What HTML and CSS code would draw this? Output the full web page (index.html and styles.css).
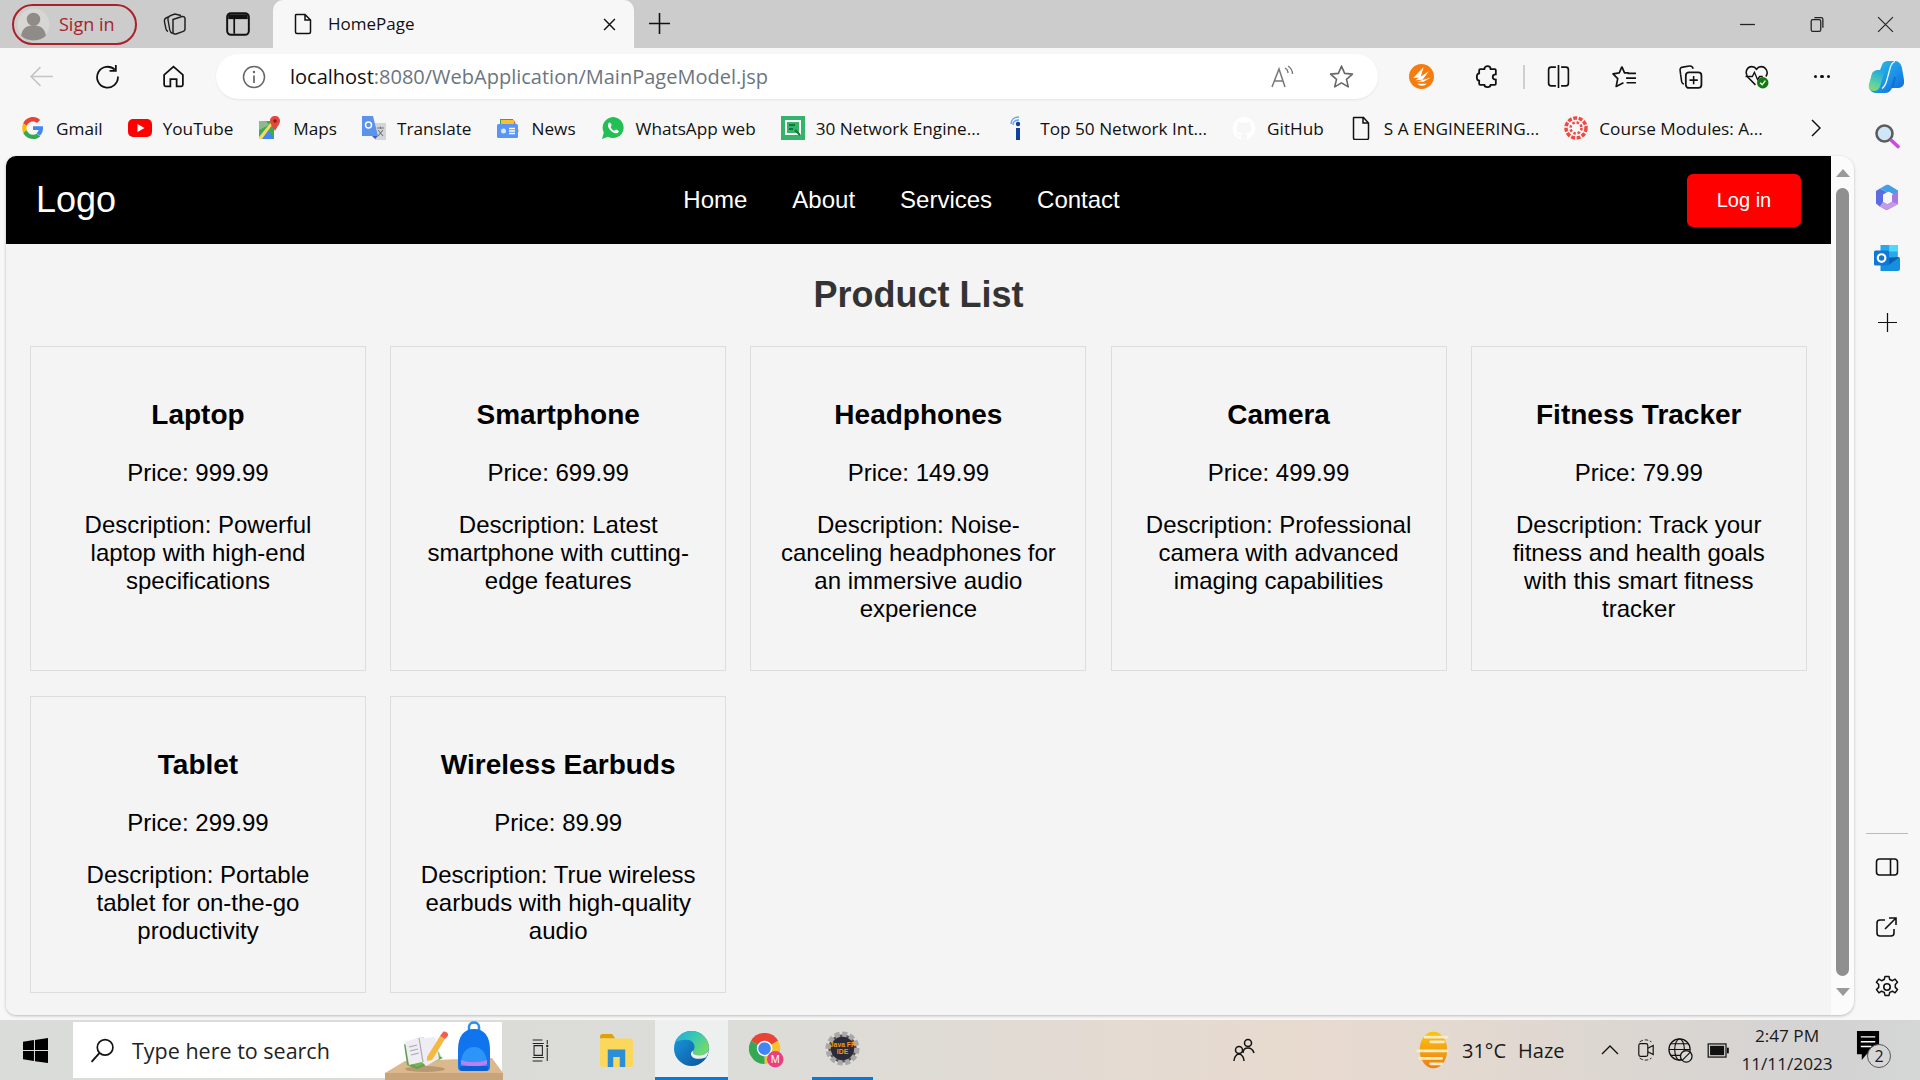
FILE: index.html

```html
<!DOCTYPE html>
<html>
<head>
<meta charset="UTF-8">
<title>HomePage</title>
<link rel="stylesheet" href="styles.css">
</head>
<body>

<!-- browser title bar -->
<div class="titlebar">
  <div class="signin">
    <svg class="avatar" viewBox="0 0 32 32"><circle cx="16" cy="16" r="15.5" fill="#d8d6d3"/><circle cx="16" cy="11" r="6.5" fill="#8f8b87"/><path d="M4 27c1-8 6-10 12-10s11 2 12 10c-3 3-7 4.5-12 4.5S7 30 4 27z" fill="#8f8b87"/></svg>
    <span>Sign in</span>
  </div>
  <svg class="tb-ic" viewBox="0 0 26 26"><path d="M6 6C3 7 2 9 2.500 11l1.500 7c.3 1 1 2 2 2.500M10 4C7 5 5.500 7 6 9l1.800 10c.2 1.500 1.500 3 3 3.500" fill="none" stroke="#222" stroke-width="1.400"/><path d="M11 8.500 20 5.500c1.500-.4 3 .5 3 2V18c0 1.200-.6 2-1.700 2.400L14 23c-1.500.4-3-.4-3-2z" fill="none" stroke="#222" stroke-width="1.500"/><path d="M10 4l3-1 6 1.500" fill="none" stroke="#222" stroke-width="1.400"/></svg>
  <svg class="tb-ic" viewBox="0 0 24 24"><rect x="2" y="2" width="20" height="20" rx="3.500" fill="none" stroke="#111" stroke-width="1.800"/><path d="M3 3h18v4.500H3z" fill="#111"/><path d="M8.500 7v14" stroke="#111" stroke-width="1.600"/></svg>
  <div class="tab">
    <svg class="tab-doc" viewBox="0 0 24 24"><path d="M5 2.500h9l5.500 5.500v12c0 1-.6 1.500-1.500 1.500H6c-.9 0-1.500-.5-1.500-1.500V3.500c0-.6.2-1 .5-1zM14 2.500V8h5.500" fill="none" stroke="#111" stroke-width="1.500"/></svg>
    <span class="tab-name">HomePage</span>
    <svg class="tab-x" viewBox="0 0 12 12"><path d="M1 1l10 10M11 1L1 11" stroke="#111" stroke-width="1.300"/></svg>
  </div>
  <svg class="tab-plus" viewBox="0 0 20 20"><path d="M10 0v20M0 10h20" stroke="#111" stroke-width="1.500"/></svg>
  <div class="winctl">
    <svg viewBox="0 0 16 16"><path d="M1 8h14" stroke="#222" stroke-width="1.200"/></svg>
    <svg viewBox="0 0 16 16"><rect x="3" y="3.500" width="9" height="11" rx="1.500" fill="none" stroke="#222" stroke-width="1.200"/><path d="M6 1.500h6.500c1 0 1.500.5 1.500 1.500v8" fill="none" stroke="#222" stroke-width="1.200"/></svg>
    <svg viewBox="0 0 16 16"><path d="M1 1l14 14M15 1L1 15" stroke="#222" stroke-width="1.100"/></svg>
  </div>
</div>

<!-- address bar row -->
<div class="toolbar">
  <div class="tbtn"><svg viewBox="0 0 24 24"><path d="M23 12H2M11 3l-9 9 9 9" fill="none" stroke="#c4c4c4" stroke-width="1.500"/></svg></div>
  <div class="tbtn"><svg viewBox="0 0 24 24"><path d="M19 5.500A10 10 0 1 0 22 12M20 1v5.500h-6" fill="none" stroke="#111" stroke-width="1.700"/></svg></div>
  <div class="tbtn"><svg viewBox="0 0 24 24"><path d="M12 2.500 3 10.500V20c0 1 .6 1.500 1.500 1.500H9v-7h6v7h4.500c.9 0 1.500-.5 1.500-1.500v-9.500z" fill="none" stroke="#111" stroke-width="1.700"/></svg></div>
  <div class="addr">
    <svg class="addr-info" viewBox="0 0 24 24"><circle cx="12" cy="12" r="10.500" fill="none" stroke="#666" stroke-width="1.500"/><path d="M12 10.500V18" stroke="#666" stroke-width="1.700"/><circle cx="12" cy="7" r="1.200" fill="#666"/></svg>
    <span class="url"><b>localhost</b>:8080/WebApplication/MainPageModel.jsp</span>
    <svg class="addr-read" viewBox="0 0 24 24"><path d="M2 22 9 4l6 18M4.500 16h9" fill="none" stroke="#777" stroke-width="1.500"/><path d="M15 3c2 1 3 3 3 5M18 1c3 2 4.500 4 4.500 8" fill="none" stroke="#777" stroke-width="1.300"/></svg>
    <svg class="addr-star" viewBox="0 0 24 24"><path d="m12 2 3 7 7.500.7-5.700 5 1.700 7.300-6.500-3.900L5.500 22l1.700-7.300-5.700-5L9 9z" fill="none" stroke="#666" stroke-width="1.500" stroke-linejoin="round"/></svg>
  </div>
  <div class="tbtn first"><svg viewBox="0 0 24 24"><circle cx="12" cy="12" r="12" fill="#f57c0f"/><path d="M4 13.500 14 3l-3 10zM6 15.500 19 7l-6 8zM7.500 17 21 13l-7 4zM8 19h9c-2 2.500-7 2.500-9 0z" fill="#fff"/></svg></div>
  <div class="tbtn"><svg viewBox="0 0 24 24"><path d="M9 5c0-4 6-4 6 0h4c.6 0 1 .4 1 1v4c-4 0-4 5 0 5v4c0 .6-.4 1-1 1h-4c0 3-6 3-6 0H5c-.6 0-1-.4-1-1v-3c-3 0-3-7 0-7V6c0-.6.4-1 1-1z" fill="none" stroke="#111" stroke-width="1.700"/></svg></div>
  <div class="tdiv"></div>
  <div class="tbtn"><svg viewBox="0 0 24 24"><path d="M9.500 3H5C3.500 3 2.500 4 2.500 5.500v13C2.500 20 3.500 21 5 21h4.500M14.500 3H19c1.500 0 2.500 1 2.500 2.500v13c0 1.500-1 2.500-2.500 2.500h-4.500M12 1v22" fill="none" stroke="#111" stroke-width="1.600"/></svg></div>
  <div class="tbtn"><svg viewBox="0 0 24 24"><path d="M9.500 2.500 12 8.500h4M9.500 2.500 7 8.500 1 9.500l4.500 4.500L4 21.500l7-3.500" fill="none" stroke="#111" stroke-width="1.600" stroke-linejoin="round"/><path d="M15 9h8M13.500 13.500H23M14 18h9" stroke="#111" stroke-width="1.600"/></svg></div>
  <div class="tbtn"><svg viewBox="0 0 24 24"><path d="M2.500 10 2 6c-.2-1.500 1-3 2.500-3L11 2c1.500-.2 3 .8 3.500 2.500M2.500 10l1 7c.2 1 1 2 2 2.500" fill="none" stroke="#111" stroke-width="1.500"/><rect x="7.500" y="8" width="15" height="15" rx="3" fill="none" stroke="#111" stroke-width="1.700"/><path d="M15 11.500v8M11 15.500h8" stroke="#111" stroke-width="1.500"/></svg></div>
  <div class="tbtn"><svg viewBox="0 0 24 24"><path d="M11 20 4 13C0 8 3 2.500 7.500 2.500c2 0 3.500 1 4.500 2.500 1-1.500 2.500-2.500 4.500-2.500C21 2.500 24 8 21 12" fill="none" stroke="#111" stroke-width="1.500"/><path d="M1.500 12H8l2-4 3 7 2-3h3" fill="none" stroke="#111" stroke-width="1.300"/><circle cx="18" cy="18" r="5.500" fill="#107c10"/><path d="m15.500 18 2 2 3-4" fill="none" stroke="#fff" stroke-width="1.300"/></svg></div>
  <div class="tbtn dots"><i></i><i></i><i></i></div>
  <div class="tbtn"><svg class="copilot" viewBox="0 0 36 32"><defs><linearGradient id="cp1" x1="0" y1="0" x2="1" y2="1"><stop offset="0" stop-color="#2cc6e8"/><stop offset=".6" stop-color="#1a8fe6"/><stop offset="1" stop-color="#1560d8"/></linearGradient><linearGradient id="cp2" x1=".6" y1="0" x2=".3" y2="1"><stop offset="0" stop-color="#22a9e0"/><stop offset=".7" stop-color="#5fd3a0"/><stop offset="1" stop-color="#86d96a"/></linearGradient></defs><path d="M14 4C15 1 17 0 20 0h7c4 0 6 3 7 7l2 12c1 5-2 8-6 8h-6c-1 3-4 5-7 5H8c-4 0-7-3-7-7L4 13c1-3 4-4 7-4h1z" fill="url(#cp1)"/><path d="M12 9h5l-4 13c-1 5-3 8-7 8-4 0-6-3-5-7l3-10c1-3 4-4 8-4z" fill="url(#cp2)"/><path d="M27 .5c-3 1-4 3-5 7l-3 11c-1 4-2 7-5 9" fill="none" stroke="#f2fbff" stroke-width="1.300"/><path d="M24 27c1-3 2-7 3-11" fill="none" stroke="#0f6fdc" stroke-width="2"/></svg></div>
</div>

<div class="middle">
  <div class="left-col">

    <!-- bookmarks -->
    <div class="bookmarks">
      <div class="bm"><svg viewBox="0 0 24 24"><path d="M22 12.200c0-.8-.1-1.400-.2-2H12v3.900h5.600c-.3 1.300-1 2.400-2.200 3.100l3.400 2.600c2-1.900 3.200-4.600 3.200-7.600z" fill="#4285f4"/><path d="M12 23c2.900 0 5.400-1 7.200-2.600l-3.500-2.700c-1 .7-2.200 1.100-3.700 1.100-2.900 0-5.300-1.900-6.200-4.500H2.300v2.800C4.100 20.600 7.800 23 12 23z" fill="#34a853"/><path d="M5.800 14.300c-.5-1.500-.5-3 0-4.600V6.900H2.300c-1.500 3-1.500 7.200 0 10.200z" fill="#fbbc05"/><path d="M12 5.500c1.600 0 3 .5 4.100 1.600l3-3C17.400 2.100 14.900 1 12 1 7.800 1 4.100 3.400 2.300 6.900l3.500 2.800C6.700 7.400 9.100 5.500 12 5.500z" fill="#ea4335"/></svg><span>Gmail</span></div>
      <div class="bm"><svg viewBox="0 0 24 24"><rect y="3" width="24" height="18" rx="5" fill="#f00"/><path d="m9.500 8 7 4-7 4z" fill="#fff"/></svg><span>YouTube</span></div>
      <div class="bm"><svg viewBox="0 0 24 24"><path d="M1 5h15v18H1z" fill="#3bab5a"/><path d="M1 23 9 13l7 10z" fill="#4285f4"/><path d="M1 21 14 5h3L4 23H1z" fill="#fbd75b"/><path d="M1 5h7l3 4-10 5z" fill="#8fb88f"/><path d="M17 0c-3 0-5 2-5 5 0 3 3 6 5 10 2-4 5-7 5-10 0-3-2-5-5-5z" fill="#e2483d"/><circle cx="17" cy="5" r="1.800" fill="#8c1c13"/></svg><span>Maps</span></div>
      <div class="bm"><svg viewBox="0 0 24 24"><path d="M11 7h13v17H13z" fill="#d3d5d8"/><path d="M15 12h7M18.500 10.500V13M16 20l5-6M16 14l5 6" stroke="#777" stroke-width="1.100"/><path d="M0 0h11l5 20H0z" fill="#5b92ee"/><path d="m10 20h6l-3 3z" fill="#3c5fc0"/><circle cx="6.500" cy="9" r="3" fill="none" stroke="#fff" stroke-width="1.500"/></svg><span>Translate</span></div>
      <div class="bm"><svg viewBox="0 0 24 24"><path d="M4 3h13l2 8H4z" fill="#34a853"/><path d="M5 4h13v5H5z" fill="#fbc02d"/><path d="M18 4l5 12-5-4z" fill="#e2574c"/><rect x="1" y="8" width="21" height="14" rx="1.500" fill="#5a95f5"/><circle cx="7.500" cy="15" r="2.500" fill="#dbe7fb"/><path d="M13 12.500h6M13 15h6M13 17.500h6" stroke="#fff" stroke-width="1.300"/></svg><span>News</span></div>
      <div class="bm"><svg viewBox="0 0 24 24"><path d="M1 23 2.800 16.500a10.500 10.500 0 1 1 4.200 4.300z" fill="#22bf55"/><path d="M8.500 6.500c-1 .3-1.800 1.800-1.500 3.500.6 3 4 6.700 7.500 7.300 1.500.2 3-.5 3.300-1.800.2-.7-2.500-2.300-3-2l-1.300 1.200c-1.500-.3-3.300-2.200-3.900-3.800l1-1.400c.3-.5-1.200-3.300-2.100-3z" fill="#fff"/></svg><span>WhatsApp web</span></div>
      <div class="bm"><svg viewBox="0 0 24 24"><rect width="24" height="24" fill="#34b36b"/><path d="M5 5h14v13H5z" fill="none" stroke="#fff" stroke-width="2"/><path d="M8 9h6M8 13h4M14 14l5 5" stroke="#173" stroke-width="2"/></svg><span>30 Network Engine...</span></div>
      <div class="bm"><svg viewBox="0 0 24 24"><path d="M6 8c0-4 3-7 8-7M8 9c0-3 2-5 6-5" fill="none" stroke="#6aa4e8" stroke-width="1.500"/><circle cx="13" cy="8" r="2.200" fill="#123f9b"/><path d="M11 12h4v12h-4z" fill="#123f9b"/></svg><span>Top 50 Network Int...</span></div>
      <div class="bm"><svg viewBox="0 0 24 24"><path d="M12 1a11.500 11.500 0 0 0-3.600 22.400c.6.1.8-.3.8-.6v-2c-3.200.7-3.900-1.500-3.900-1.500-.5-1.300-1.300-1.700-1.300-1.700-1-.7.1-.7.1-.7 1.200.1 1.800 1.200 1.800 1.200 1 1.800 2.700 1.300 3.300 1 .1-.8.4-1.300.7-1.600-2.600-.3-5.300-1.300-5.300-5.700 0-1.300.5-2.300 1.200-3.100-.1-.3-.5-1.500.1-3.100 0 0 1-.3 3.200 1.200a11 11 0 0 1 5.800 0c2.200-1.500 3.200-1.200 3.200-1.200.6 1.600.2 2.800.1 3.100.7.8 1.200 1.800 1.200 3.100 0 4.400-2.700 5.400-5.300 5.700.4.4.8 1 .8 2.100v3.100c0 .3.2.7.8.6A11.500 11.500 0 0 0 12 1z" fill="#fff"/></svg><span>GitHub</span></div>
      <div class="bm"><svg viewBox="0 0 24 24"><path d="M5 1.500h9.500l5 5.500v15c0 .9-.6 1.500-1.500 1.500H6c-.9 0-1.500-.6-1.500-1.500V2c0-.3.2-.5.500-.5zM14 1.500V7h5.500" fill="none" stroke="#111" stroke-width="1.500"/></svg><span>S A ENGINEERING...</span></div>
      <div class="bm"><svg viewBox="0 0 24 24"><circle cx="12" cy="12" r="10" fill="none" stroke="#ee4a42" stroke-width="3.500" stroke-dasharray="4 1.500"/><circle cx="12" cy="12" r="5.500" fill="none" stroke="#ee4a42" stroke-width="2.500" stroke-dasharray="2.500 1.800"/></svg><span>Course Modules: A...</span></div>
      <svg class="bm-more" viewBox="0 0 10 18"><path d="m1 1 8 8-8 8" fill="none" stroke="#111" stroke-width="1.500"/></svg>
    </div>

    <!-- the page itself -->
    <div class="frame">
      <div class="page">
        <nav class="navbar">
          <div class="logo">Logo</div>
          <ul class="nav-links">
            <li>Home</li>
            <li>About</li>
            <li>Services</li>
            <li>Contact</li>
          </ul>
          <button class="login">Log in</button>
        </nav>
        <h2 class="page-title">Product List</h2>
        <div class="products">
          <div class="card">
            <h3>Laptop</h3>
            <p class="price">Price: 999.99</p>
            <p>Description: Powerful laptop with high-end specifications</p>
          </div>
          <div class="card">
            <h3>Smartphone</h3>
            <p class="price">Price: 699.99</p>
            <p>Description: Latest smartphone with cutting-edge features</p>
          </div>
          <div class="card">
            <h3>Headphones</h3>
            <p class="price">Price: 149.99</p>
            <p>Description: Noise-canceling headphones for an immersive audio experience</p>
          </div>
          <div class="card">
            <h3>Camera</h3>
            <p class="price">Price: 499.99</p>
            <p>Description: Professional camera with advanced imaging capabilities</p>
          </div>
          <div class="card">
            <h3>Fitness Tracker</h3>
            <p class="price">Price: 79.99</p>
            <p>Description: Track your fitness and health goals with this smart fitness tracker</p>
          </div>
          <div class="card">
            <h3>Tablet</h3>
            <p class="price">Price: 299.99</p>
            <p>Description: Portable tablet for on-the-go productivity</p>
          </div>
          <div class="card">
            <h3>Wireless Earbuds</h3>
            <p class="price">Price: 89.99</p>
            <p>Description: True wireless earbuds with high-quality audio</p>
          </div>
        </div>
      </div>
      <div class="scrollbar">
        <div class="arrow-up"></div>
        <div class="thumb"></div>
        <div class="arrow-down"></div>
      </div>
    </div>
  </div>

  <!-- edge sidebar -->
  <div class="sidebar">
    <svg class="side-ic" viewBox="0 0 26 26"><circle cx="10.500" cy="10.500" r="8" fill="#cfe6f7" stroke="#5c5c5c" stroke-width="2.600"/><path d="m17.500 17.500 6.500 6" stroke="#d044e8" stroke-width="3.600" stroke-linecap="round"/></svg>
    <svg class="side-ic" viewBox="0 0 24 26"><path d="M5 4.500 12 8.200l-4 2.300v7.800l-3 4.500L1 19.500v-12.500z" fill="#5a6ee0"/><path d="M5 4.500 11 1c1-.5 2-.5 3 0l9 5.500V13l-5-3-4-2.200-2 .4z" fill="#3fa2e6"/><path d="M23 7v12c0 .8-.4 1.500-1 1.800l-9 4.700c-1 .5-2 .5-3 0l-5-3 3-4.500 4.500 2.300 4.500-2.600V11z" fill="#a877e0"/><path d="M5 22.500l3-4.500 4.500 2.300 4.500-2.600 6 2.300-10.500 6z" fill="#c59ae8"/></svg>
    <svg class="side-ic" viewBox="0 0 24 24"><path d="M6 0h16v12H6z" fill="#28a8ea"/><path d="M14 0h8v6h-8z" fill="#50d9ff"/><path d="M6 12h18v10c0 1-.6 2-2 2H6z" fill="#1490df"/><path d="M24 11 14 18l-8-5v-1z" fill="#0a5fb0"/><rect y="5" width="14" height="14" rx="1.500" fill="#0f78d4"/><circle cx="7" cy="12" r="3.500" fill="none" stroke="#fff" stroke-width="2"/></svg>
    <svg class="side-plus" viewBox="0 0 20 20"><path d="M10 0v20M0 10h20" stroke="#111" stroke-width="1.300"/></svg>
    <div class="side-fill"></div>
    <div class="side-div"></div>
    <svg class="side-ic low" viewBox="0 0 24 24"><rect x="1.500" y="4" width="21" height="16" rx="3" fill="none" stroke="#111" stroke-width="1.600"/><path d="M15.500 4v16" stroke="#111" stroke-width="1.600"/></svg>
    <svg class="side-ic low" viewBox="0 0 24 24"><path d="M10 5H5c-2 0-3 1-3 3v10c0 2 1 3 3 3h11c2 0 3-1 3-3v-4M10 14 21 3M14 3h7v7" fill="none" stroke="#111" stroke-width="1.600"/></svg>
    <svg class="side-ic low" viewBox="0 0 24 24"><circle cx="12" cy="12" r="3.200" fill="none" stroke="#111" stroke-width="1.600"/><path d="m10 1.500 4 0 .7 3 2.700 1.200 2.700-1.600 2.400 3.200-2.200 2.200v2.900l2.200 2.200-2.400 3.200-2.700-1.600-2.700 1.200-.7 3h-4l-.7-3-2.700-1.200-2.700 1.600-2.400-3.200 2.200-2.200v-2.900L1.400 7.300l2.400-3.200 2.700 1.600 2.700-1.200z" fill="none" stroke="#111" stroke-width="1.500" stroke-linejoin="round"/></svg>
  </div>
</div>

<!-- windows taskbar -->
<div class="taskbar">
  <svg class="start" viewBox="0 0 24 24"><path d="M0 3.500 10.500 2v9.500H0zM11.500 1.800 24 0v11.500H11.500zM0 12.500h10.500V22L0 20.500zM11.500 12.500H24V24l-12.500-1.800z" fill="#000"/></svg>
  <div class="search">
    <svg class="search-ic" viewBox="0 0 24 24"><circle cx="14.500" cy="9" r="7.500" fill="none" stroke="#111" stroke-width="1.600"/><path d="M9 14.500 1.500 23" stroke="#111" stroke-width="1.800"/></svg>
    <span>Type here to search</span>
    <svg class="search-art" viewBox="0 0 118 60">
      <path d="M20 41 107 38l11 15v7H0v-7z" fill="#dcb98d"/>
      <path d="M0 53h118v7H0z" fill="#c9a47a"/>
      <ellipse cx="40" cy="49" rx="20" ry="3" fill="#b89870"/>
      <path d="M19 24l35 12 4 2-26 11-10-4z" fill="#5fa24c"/>
      <path d="M21 23 38 17l16 15 2 5-24 10-9-5z" fill="#7ab84f" opacity=".8"/>
      <path d="M20 22l15-5 6 1 9-1 4 22-11 6-2 1-4-4-13 3z" fill="#efecf3"/>
      <path d="M34 18l4 24M24 27l8-2M25 31l8-2M26 35l8-2" stroke="#a9a8b4" stroke-width="1.200"/>
      <path d="M42 37 55 16l5 3-13 21-5 1z" fill="#f5b93f"/>
      <path d="M55 16l3-4c2-1 4 0 5 2 0 1 0 2-1 3l-2 2z" fill="#ee5f4f"/>
      <path d="M84 7c0-6 10-6 10 0v4H84z" fill="none" stroke="#2a8df0" stroke-width="2.500"/>
      <path d="M73 30c0-14 6-21 16-21s16 7 16 21v17c0 3-2 4-4 4H77c-2 0-4-1-4-4z" fill="#0f74ee"/>
      <path d="M76 44c0-10 5-17 13-17s13 7 13 17v2c-8 2-18 2-26 0z" fill="#2d95f7"/>
      <path d="M76 40c8 3 18 3 26 0v4c-8 3-18 3-26 0z" fill="#bb7ff3"/>
      <rect x="75" y="46" width="28" height="5" rx="2" fill="#0c5fd0"/>
    </svg>
  </div>
  <svg class="task-view" viewBox="0 0 24 36"><path d="M0 3h14M0 33h14M2 11h12v14H2zM0 8h16M0 28h16M21 3v6M21 14v19" fill="none" stroke="#222" stroke-width="1.500"/><rect x="19.500" y="10" width="3" height="3" fill="#222"/></svg>
  <div class="app"><svg viewBox="0 0 32 32"><path d="M1 3c0-1 1-2 2-2h9l3 4H1z" fill="#e0a100"/><rect x="1" y="5" width="30" height="26" rx="2" fill="#fbd75b"/><path d="M8 15h16v16h-5v-9h-6v9H8z" fill="#2a8fd8"/></svg></div>
  <div class="app active"><svg viewBox="0 0 36 36"><defs><linearGradient id="eg1" x1="0" y1="0" x2="1" y2="1"><stop offset="0" stop-color="#1b9de2"/><stop offset="1" stop-color="#0a4f98"/></linearGradient><linearGradient id="eg2" x1="0" y1="0" x2="1" y2=".6"><stop offset="0" stop-color="#2aa7e0"/><stop offset=".5" stop-color="#33c9b4"/><stop offset="1" stop-color="#74d86a"/></linearGradient></defs><circle cx="18" cy="18" r="18" fill="url(#eg1)"/><path d="M1 11C5 3 12 0 18 0c10 0 18 8 18 17 0 5-5 8-10 8-5 0-8-2-6-5 3-4 0-11-7-11-6 0-11 2-12 2z" fill="url(#eg2)"/><path d="M20 20c-2 3 1 5 6 5 5 0 10-3 10-7 0 3-1 6-3 9-5 2-9 2-12 1-4-2-5-6-1-8z" fill="#eef0f0"/></svg></div>
  <div class="app"><svg viewBox="0 0 36 36"><path d="M16 16 2.100 8A16 16 0 0 1 29.900 8z" fill="#ea4335"/><path d="M16 16 29.900 8A16 16 0 0 1 16 32z" fill="#fbc02d"/><path d="M16 16V32A16 16 0 0 1 2.100 8z" fill="#34a853"/><circle cx="16" cy="16" r="8" fill="#fff"/><circle cx="16" cy="16" r="6.500" fill="#4285f4"/><circle cx="27" cy="27" r="8.500" fill="#ea3f80"/><text x="27" y="31" class="badge-m">M</text></svg></div>
  <div class="app underlined"><svg viewBox="0 0 36 36"><circle cx="18" cy="18" r="14.500" fill="#57524c" stroke="#a8a8a8" stroke-width="6" stroke-dasharray="5 2.500"/><circle cx="18" cy="18" r="12" fill="#2b2a38"/><text x="18" y="16" class="badge-j">Java FF</text><text x="18" y="24" class="badge-j">IDE</text></svg></div>
  <svg class="people" viewBox="0 0 24 24"><circle cx="16" cy="5" r="3.500" fill="none" stroke="#111" stroke-width="1.500"/><path d="M11 15c0-3 2-5 5-5s5 2 6 5" fill="none" stroke="#111" stroke-width="1.500"/><circle cx="7" cy="12" r="3.500" fill="none" stroke="#111" stroke-width="1.500"/><path d="M2 23c0-3 2-7 5-7s5 4 5 7" fill="none" stroke="#111" stroke-width="1.500"/></svg>
  <svg class="weather" viewBox="0 0 36 42"><defs><linearGradient id="sun" x1="0" y1="0" x2="0" y2="1"><stop offset="0" stop-color="#fbc50f"/><stop offset="1" stop-color="#f07d12"/></linearGradient></defs><ellipse cx="19" cy="21" rx="15" ry="20" fill="url(#sun)"/><path d="M10 7h24M16 12h14M2 22h22M26 22h8M4 30h24M16 36h12" stroke="#f6edc8" stroke-width="3" stroke-linecap="round"/></svg>
  <span class="temp">31°C</span><span class="haze">Haze</span>
  <svg class="tray-chev" viewBox="0 0 18 10"><path d="m1 9 8-8 8 8" fill="none" stroke="#111" stroke-width="1.300"/></svg>
  <svg class="tray-mic" viewBox="0 0 20 28"><path d="M3 5c4-3 9-3 13 0M3 23c4 3 9 3 13 0" fill="none" stroke="#111" stroke-width="1" stroke-dasharray="4 2"/><rect x="2" y="7" width="10" height="14" rx="2" fill="none" stroke="#111" stroke-width="1.300"/><path d="m12 12 6-3v10l-6-3" fill="none" stroke="#111" stroke-width="1.300"/></svg>
  <svg class="tray-globe" viewBox="0 0 26 26"><circle cx="12" cy="12" r="11" fill="none" stroke="#111" stroke-width="1.300"/><ellipse cx="12" cy="12" rx="5" ry="11" fill="none" stroke="#111" stroke-width="1.200"/><path d="M1 12h22M3 6h18M3 18h18" stroke="#111" stroke-width="1.200"/><circle cx="19" cy="19" r="6" fill="#dcdad6" stroke="#111" stroke-width="1.300"/><path d="m15 23 8-8" stroke="#111" stroke-width="1.200"/></svg>
  <svg class="tray-batt" viewBox="0 0 24 16"><rect x="1" y="1" width="19" height="14" fill="none" stroke="#111" stroke-width="1.300"/><rect x="3" y="3" width="15" height="10" fill="#111"/><rect x="21" y="5" width="2" height="6" fill="#111"/></svg>
  <div class="clock"><span>2:47 PM</span><span>11/11/2023</span></div>
  <div class="notif">
    <svg viewBox="0 0 26 34"><path d="M1 1h23v24H11l-5 6v-6H1z" fill="#000"/><path d="M5 7h15M5 12h15M5 17h11" stroke="#fff" stroke-width="1.500"/></svg>
    <span class="notif-count">2</span>
  </div>
</div>

</body>
</html>
```

FILE: styles.css

```css
html, body {
  margin: 0;
  padding: 0;
}
body {
  width: 1920px;
  height: 1080px;
  overflow: hidden;
  display: flex;
  flex-direction: column;
  font-family: "Open Sans", "Noto Sans", sans-serif;
  background-color: #f7f7f7;
  color: #111;
}
svg {
  display: block;
  flex: none;
}

/* title bar */
.titlebar {
  height: 48px;
  flex: none;
  display: flex;
  align-items: center;
  background-color: #cccccc;
  box-sizing: border-box;
  padding-left: 12px;
}
.signin {
  width: 125px;
  height: 41px;
  box-sizing: border-box;
  border: 2px solid #a9222b;
  border-radius: 21px;
  display: flex;
  align-items: center;
  gap: 9px;
  padding-left: 3px;
  color: #a9222b;
  font-size: 18px;
}
.avatar {
  width: 33px;
  height: 33px;
}
.tb-ic {
  width: 26px;
  height: 26px;
  margin-left: 25px;
}
.tb-ic + .tb-ic {
  margin-left: 37px;
}
.tab {
  width: 361px;
  height: 48px;
  margin-left: 22px;
  background-color: #f7f7f7;
  border-radius: 10px 10px 0 0;
  display: flex;
  align-items: center;
  padding-left: 18px;
  box-sizing: border-box;
}
.tab-doc {
  width: 24px;
  height: 26px;
}
.tab-name {
  font-size: 17px;
  margin: 0 0 2px 13px;
  width: 233px;
}
.tab-x {
  width: 13px;
  height: 13px;
  margin-left: 42px;
}
.tab-plus {
  width: 21px;
  height: 21px;
  margin: 0 0 2px 15px;
}
.winctl {
  margin-left: auto;
  display: flex;
  align-items: center;
  gap: 52px;
  padding-right: 26px;
}
.winctl svg {
  width: 17px;
  height: 17px;
}

/* address row */
.toolbar {
  height: 60px;
  flex: none;
  display: flex;
  align-items: center;
  padding: 0 0 3px 8px;
  background-color: #f7f7f7;
  box-sizing: border-box;
}
.tbtn {
  width: 66px;
  height: 48px;
  flex: none;
  display: flex;
  align-items: center;
  justify-content: center;
  gap: 3px;
}
.tbtn svg {
  width: 25px;
  height: 25px;
}
.tbtn svg.copilot {
  width: 36px;
  height: 32px;
}
.tbtn.first {
  margin-left: 10px;
}
.dots i {
  width: 3.5px;
  height: 3.5px;
  border-radius: 50%;
  background-color: #111;
}
.tdiv {
  width: 2px;
  height: 24px;
  flex: none;
  margin-left: 3px;
  background-color: #cfcfcf;
}
.tbtn:last-child {
  margin-left: -2px;
}
.addr {
  width: 1162px;
  height: 45px;
  margin-left: 10px;
  background-color: #ffffff;
  border-radius: 23px;
  display: flex;
  align-items: center;
  box-shadow: 0 1px 2px rgba(0, 0, 0, 0.08);
  flex: none;
}
.addr-info {
  width: 24px;
  height: 24px;
  margin-left: 26px;
}
.url {
  margin-left: 24px;
  font-size: 20px;
  color: #6b7580;
}
.url b {
  font-weight: 400;
  color: #111;
}
.addr-read {
  width: 24px;
  height: 24px;
  margin-left: auto;
}
.addr-star {
  width: 25px;
  height: 25px;
  margin: 0 24px 0 35px;
}

/* middle part */
.middle {
  flex: 1;
  min-height: 0;
  display: flex;
}
.left-col {
  width: 1854px;
  flex: none;
  display: flex;
  flex-direction: column;
}
.bookmarks {
  height: 48px;
  flex: none;
  display: flex;
  align-items: center;
  padding: 0 0 8px 21px;
  gap: 25px;
  box-sizing: border-box;
}
.bm {
  display: flex;
  align-items: center;
  gap: 11px;
  font-size: 17.2px;
  white-space: nowrap;
}
.bm svg {
  width: 24px;
  height: 24px;
}
.bm-more {
  width: 10px;
  height: 18px;
  margin-left: 23px;
}

/* page frame */
.frame {
  height: 859px;
  margin-left: 6px;
  display: flex;
  overflow: hidden;
  border-radius: 10px 14px 14px 10px;
  background-color: #fbfbfb;
  box-shadow: 0 1px 3px rgba(0, 0, 0, 0.25);
}
.page {
  width: 1825px;
  flex: none;
  background-color: #f4f4f4;
  font-family: "Liberation Sans", Arial, sans-serif;
}
.navbar {
  height: 88px;
  box-sizing: border-box;
  padding: 0 30px;
  background-color: #000;
  color: #fff;
  display: flex;
  align-items: center;
  justify-content: space-between;
}
.logo {
  font-size: 36px;
}
.nav-links {
  list-style: none;
  margin: 0;
  padding: 0;
  display: flex;
  gap: 45px;
  font-size: 24px;
}
.login {
  width: 114px;
  height: 53px;
  background-color: #ff0000;
  color: #fff;
  border: none;
  border-radius: 6px;
  font-family: inherit;
  font-size: 20px;
  padding: 0;
}
.page-title {
  margin: 30px 0 31px;
  text-align: center;
  font-size: 36px;
  line-height: 41px;
  color: #333;
}
.products {
  display: grid;
  grid-template-columns: repeat(5, 336px);
  gap: 25px 24.2px;
  padding-left: 24px;
}
.card {
  box-sizing: border-box;
  border: 1px solid #ddd;
  padding: 27px 27px 47px;
  text-align: center;
  font-size: 24px;
  line-height: 28px;
  color: #000;
}
.card h3 {
  margin: 25px 0 28px;
  font-size: 28px;
  line-height: 32px;
}
.card p {
  margin: 24px 0 0;
}
.card .price {
  margin-top: 0;
}

/* scrollbar */
.scrollbar {
  flex: 1;
  display: flex;
  flex-direction: column;
  align-items: center;
  padding-top: 13px;
}
.thumb {
  width: 13px;
  height: 788px;
  margin: 11px 0 12px;
  border-radius: 7px;
  background-color: #8f8f8f;
}
.arrow-up, .arrow-down {
  width: 0;
  height: 0;
  border-left: 7px solid transparent;
  border-right: 7px solid transparent;
}
.arrow-up {
  border-bottom: 8px solid #9a9a9a;
}
.arrow-down {
  border-top: 8px solid #9a9a9a;
}

/* sidebar */
.sidebar {
  flex: 1;
  display: flex;
  flex-direction: column;
  align-items: center;
  padding-top: 15px;
  padding-bottom: 21px;
  box-sizing: border-box;
}
.side-ic {
  width: 26px;
  height: 26px;
  margin-bottom: 35px;
}
.side-plus {
  width: 19px;
  height: 19px;
  margin-top: 7px;
}
.side-fill {
  flex: 1;
}
.side-div {
  width: 42px;
  height: 1px;
  background-color: #bbb;
  margin-bottom: 21px;
}
.side-ic.low {
  width: 24px;
  height: 24px;
  margin-bottom: 36px;
}
.side-ic.low:last-child {
  margin-bottom: 0;
}

/* taskbar */
.taskbar {
  height: 60px;
  flex: none;
  display: flex;
  align-items: center;
  background: linear-gradient(90deg, #d9dcd8 0%, #dcdcd8 40%, #e8dacf 68%, #e3d9d0 76%, #d3d3d3 96%, #d5d6d6 100%);
  font-size: 20px;
  color: #1a1a1a;
}
.start {
  width: 25px;
  height: 25px;
  margin-left: 23px;
}
.search {
  width: 429px;
  height: 56px;
  margin-left: 25px;
  background-color: #fff;
  display: flex;
  align-items: center;
  position: relative;
  font-size: 21.5px;
  color: #222;
  flex: none;
}
.search-ic {
  width: 25px;
  height: 25px;
  margin-left: 17px;
}
.search span {
  margin-left: 17px;
}
.search-art {
  position: absolute;
  right: -1px;
  bottom: -2px;
  width: 118px;
  height: 60px;
}
.task-view {
  width: 24px;
  height: 25px;
  margin-left: 27px;
}
.app {
  width: 73px;
  height: 60px;
  flex: none;
  margin: 0 1px;
  box-sizing: border-box;
  display: flex;
  align-items: center;
  justify-content: center;
}
.app svg {
  width: 35px;
  height: 35px;
}
.task-view + .app {
  margin-left: 27px;
}
.app.active {
  background-color: #eef0f0;
  border-bottom: 3px solid #0a78d4;
}
.app.underlined {
  width: 61px;
  margin-left: 8px;
  border-bottom: 3px solid #0a78d4;
}
.badge-m {
  font: 11px "Liberation Sans", sans-serif;
  fill: #fff;
  text-anchor: middle;
}
.badge-j {
  font: bold 7px "Liberation Sans", sans-serif;
  fill: #f09a1a;
  text-anchor: middle;
}
.people {
  width: 24px;
  height: 24px;
  margin-left: 358px;
}
.weather {
  width: 33px;
  height: 40px;
  margin-left: 160px;
}
.temp {
  margin-left: 13px;
}
.haze {
  margin-left: 12px;
}
.tray-chev {
  width: 18px;
  height: 10px;
  margin-left: 36px;
}
.tray-mic {
  width: 18px;
  height: 26px;
  margin-left: 18.5px;
}
.tray-globe {
  width: 25px;
  height: 25px;
  margin-left: 13px;
}
.tray-batt {
  width: 23px;
  height: 15px;
  margin-left: 14px;
}
.clock {
  width: 94px;
  margin-left: 10px;
  display: flex;
  flex-direction: column;
  align-items: center;
  gap: 6px;
  font-size: 17.2px;
  line-height: 22px;
  white-space: nowrap;
}
.notif {
  margin-left: 22px;
  position: relative;
  width: 34px;
  height: 40px;
}
.notif svg {
  width: 25px;
  height: 33px;
}
.notif-count {
  position: absolute;
  left: 11px;
  top: 14px;
  width: 24px;
  height: 24px;
  box-sizing: border-box;
  border: 1px solid #555;
  border-radius: 50%;
  background-color: #d6d6d6;
  font-size: 16px;
  line-height: 22px;
  text-align: center;
}
```
